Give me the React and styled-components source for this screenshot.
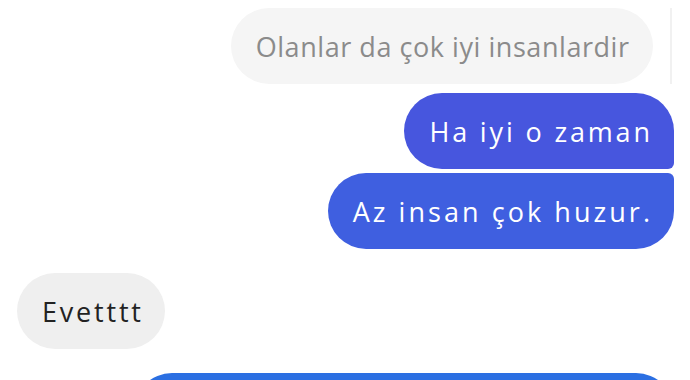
import React from "react";
import styled, { createGlobalStyle } from "styled-components";

const Global = createGlobalStyle`
  html, body { margin: 0; padding: 0; background: #ffffff; }
  body { font-family: "Open Sans", "Noto Sans", sans-serif; overflow: hidden; }
`;

const Thread = styled.div`
  width: 690px;
  height: 380px;
  overflow: hidden;
  display: flex;
  flex-direction: column;
  padding-top: 8px;
  box-sizing: border-box;
`;

const Row = styled.div`
  display: flex;
  align-items: stretch;
  justify-content: ${(p) => (p.$mine ? "flex-end" : "flex-start")};
  padding: 0 ${(p) => (p.$padRight ?? 16)}px 0 17px;
  margin-top: ${(p) => p.$gap || 0}px;
  gap: 17px;
  flex-shrink: 0;
`;

const Bubble = styled.div`
  height: 76px;
  box-sizing: border-box;
  display: flex;
  align-items: center;
  padding: 0 ${(p) => 24 - (p.$spacing ?? 0.6)}px 0 25px;
  font-size: 27px;
  letter-spacing: ${(p) => p.$spacing ?? 0.6}px;
  white-space: nowrap;
  width: ${(p) => (p.$width ? `${p.$width}px` : "auto")};
  background: ${(p) => p.$bg};
  color: ${(p) => p.$fg};
  border-radius: ${(p) => p.$radius || "38px"};
`;

const EdgeLine = styled.div`
  width: 2px;
  background: #f1f1f1;
`;

export default function App() {
  return (
    <>
      <Global />
      <Thread>
        <Row $mine $padRight={18}>
          <Bubble $bg="#f5f5f5" $fg="#8b8b8b" $spacing={0.55}>
            Olanlar da çok iyi insanlardir
          </Bubble>
          <EdgeLine />
        </Row>
        <Row $mine $gap={9}>
          <Bubble $bg="#4756de" $fg="#ffffff" $spacing={2.85} $radius="38px 38px 6px 38px">
            Ha iyi o zaman
          </Bubble>
        </Row>
        <Row $mine $gap={4}>
          <Bubble $bg="#3f5fe0" $fg="#ffffff" $spacing={3.05} $radius="38px 6px 38px 38px">
            Az insan çok huzur.
          </Bubble>
        </Row>
        <Row $gap={24}>
          <Bubble $bg="#efefef" $fg="#222222" $spacing={2.8}>
            Evetttt
          </Bubble>
        </Row>
        <Row $mine $gap={24}>
          <Bubble $bg="#2b6fe2" $fg="#ffffff" $width={540} />
        </Row>
      </Thread>
    </>
  );
}
